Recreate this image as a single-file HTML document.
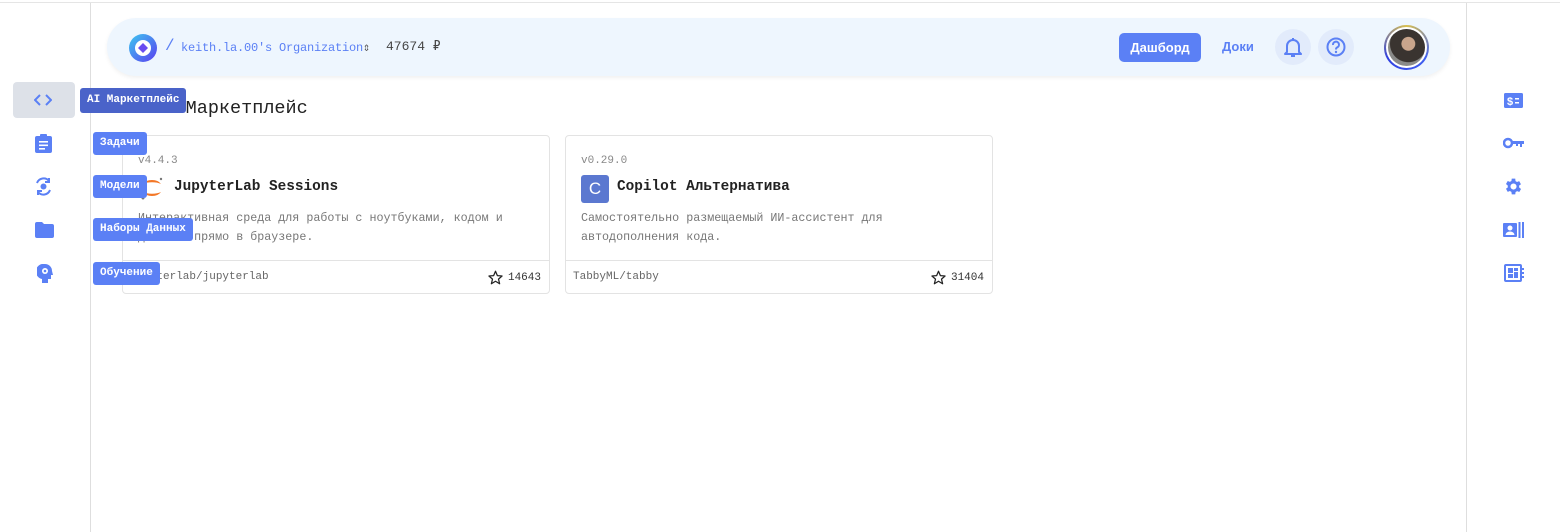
<!DOCTYPE html>
<html><head><meta charset="utf-8"><style>
*{box-sizing:border-box;margin:0;padding:0}
body{width:1560px;height:532px;background:#fff;font-family:"Liberation Mono",monospace;position:relative;overflow:hidden;color:#222}
.abs{position:absolute}
.topline{left:0;top:2px;width:1560px;height:1px;background:#e5e5e5}
.lside{left:90px;top:3px;width:1px;height:529px;background:#dedede}
.rside{left:1466px;top:3px;width:1px;height:529px;background:#dedede}
.hdr{left:107px;top:18px;width:1343px;height:58px;border-radius:29px;background:#eef6fe;box-shadow:0 2px 4px rgba(0,0,0,.06)}
.tip{position:absolute;height:23px;line-height:23px;padding:0 7px;color:#fff;font-size:11px;border-radius:3px;background:#5b80f5;white-space:nowrap;font-family:"Liberation Mono",monospace;font-weight:bold}
.card{position:absolute;top:135px;width:428px;height:159px;border:1px solid #e3e3e3;border-radius:4px;background:#fff}
.ver{position:absolute;left:15px;top:19px;font-size:11px;color:#888}
.ttl{position:absolute;left:51px;top:43px;font-size:14.4px;font-weight:bold;color:#222}
.desc{position:absolute;left:15px;top:73px;font-size:11.7px;line-height:19px;color:#777;width:400px}
.foot{position:absolute;left:0;top:124px;width:100%;border-top:1px solid #e3e3e3;height:34px}
.repo{position:absolute;left:7px;top:10px;font-size:11px;color:#666}
.stars{position:absolute;right:8px;top:9px;font-size:11px;color:#333;display:flex;align-items:center;gap:5px}
.ic{position:absolute;fill:#5b80f5}
</style></head><body>
<div class="abs topline"></div>
<div class="abs lside"></div>
<div class="abs rside"></div>

<div class="abs" style="left:13px;top:82px;width:62px;height:36px;border-radius:4px;background:#dde1e8"></div>
<svg class="abs" style="left:34px;top:93px" width="18" height="14" viewBox="0 0 18 14"><path d="M6 2L1 7l5 5M12 2l5 5-5 5" stroke="#5b80f5" stroke-width="2" fill="none"/></svg>
<svg class="ic" style="left:35px;top:134px" width="17" height="19" viewBox="0 0 17 19"><rect x="0" y="2" width="17" height="17" rx="2"/><rect x="5" y="0" width="7" height="4" rx="1"/><rect x="4" y="7" width="9" height="1.6" fill="#fff"/><rect x="4" y="10.5" width="9" height="1.6" fill="#fff"/><rect x="4" y="14" width="6" height="1.6" fill="#fff"/></svg>
<svg class="abs" style="left:34px;top:177px" width="19" height="19" viewBox="0 0 19 19"><path d="M3 6a7 7 0 0 1 12-2M16 13a7 7 0 0 1-12 2" stroke="#5b80f5" stroke-width="2" fill="none"/><circle cx="9.5" cy="9.5" r="3" fill="#5b80f5"/><path d="M15 1v4h-4M4 18v-4h4" stroke="#5b80f5" stroke-width="2" fill="none"/></svg>
<svg class="ic" style="left:35px;top:222px" width="19" height="16" viewBox="0 0 19 16"><path d="M0 2a2 2 0 0 1 2-2h5l2 2h8a2 2 0 0 1 2 2v10a2 2 0 0 1-2 2H2a2 2 0 0 1-2-2z"/></svg>
<svg class="ic" style="left:37px;top:264px" width="16" height="19" viewBox="0 0 16 19"><path d="M8 0a7 7 0 0 1 7 7l1 4h-2v4h-3v4H5v-4a7 7 0 0 1 3-15z"/><circle cx="8" cy="7" r="3" fill="#fff"/><circle cx="8" cy="7" r="1.3"/></svg>

<div class="abs hdr"></div>
<svg class="abs" style="left:128px;top:33px" width="30" height="30" viewBox="0 0 30 30"><defs><linearGradient id="g" x1="0" y1="0" x2="1" y2="1"><stop offset="0" stop-color="#3cc8f0"/><stop offset="1" stop-color="#5b3ef0"/></linearGradient></defs><circle cx="15" cy="15" r="14" fill="url(#g)"/><circle cx="15" cy="15" r="8" fill="#fff"/><path d="M15 10l5 5-5 5-5-5z" fill="#6a4cf0"/></svg>
<div class="abs" style="left:165px;top:37px;font-size:16px;color:#5b80f5">/</div>
<div class="abs" style="left:181px;top:40px;font-size:12px;color:#5b80f5;letter-spacing:-0.2px">keith.la.00's Organization<span style="color:#555">⇕</span></div>
<div class="abs" style="left:386px;top:39px;font-size:13px;color:#444">47674 ₽</div>
<div class="abs" style="left:1119px;top:33px;width:82px;height:29px;border-radius:5px;background:#5b80f5;color:#fff;font-family:'Liberation Sans',sans-serif;font-weight:bold;font-size:13px;line-height:29px;text-align:center">Дашборд</div>
<div class="abs" style="left:1222px;top:39px;font-family:'Liberation Sans',sans-serif;font-weight:bold;font-size:13px;color:#5b80f5">Доки</div>
<div class="abs" style="left:1275px;top:29px;width:36px;height:36px;border-radius:50%;background:#e2ebfb"></div>
<svg class="abs" style="left:1284px;top:37px" width="18" height="21" viewBox="0 0 18 21"><path d="M9 1v2M3 15V9a6 6 0 0 1 12 0v6l2 2H1z" stroke="#5b80f5" stroke-width="2" fill="none" stroke-linejoin="round"/><path d="M7 19h4" stroke="#5b80f5" stroke-width="2"/></svg>
<div class="abs" style="left:1318px;top:29px;width:36px;height:36px;border-radius:50%;background:#e2ebfb"></div>
<svg class="abs" style="left:1326px;top:37px" width="20" height="20" viewBox="0 0 20 20"><circle cx="10" cy="10" r="8.5" stroke="#5b80f5" stroke-width="2" fill="none"/><path d="M7 8a3 3 0 1 1 4 2.5c-1 .5-1 1-1 2" stroke="#5b80f5" stroke-width="2" fill="none"/><circle cx="10" cy="15" r="1.2" fill="#5b80f5"/></svg>
<div class="abs" style="left:1384px;top:25px;width:45px;height:45px;border-radius:50%;background:conic-gradient(#d9c050,#4060f0,#3040e0,#d9c050);padding:2px"><div style="width:100%;height:100%;border-radius:50%;background:#fff;padding:2px"><div style="width:100%;height:100%;border-radius:50%;background:radial-gradient(circle at 55% 40%,#c9a58c 0 22%,#3a3430 24% 60%,#8a8a88 62%)"></div></div></div>

<svg class="ic" style="left:1504px;top:93px" width="19" height="15" viewBox="0 0 19 15"><rect width="19" height="15" rx="1.5"/><text x="3" y="12" font-size="11" font-weight="bold" fill="#fff" font-family="Liberation Sans">$</text><rect x="11" y="5" width="4" height="1.5" fill="#fff"/><rect x="11" y="9" width="4" height="1.5" fill="#fff"/></svg>
<svg class="ic" style="left:1503px;top:137px" width="21" height="12" viewBox="0 0 21 12"><circle cx="5" cy="6" r="4" stroke="#5b80f5" stroke-width="2.5" fill="none"/><path d="M9 4h12v3h-2v3h-2V7h-2v2h-2V7H9z"/></svg>
<svg class="ic" style="left:1503px;top:176px" width="21" height="21" viewBox="0 0 24 24"><path d="M19.4 13a7.5 7.5 0 0 0 0-2l2.1-1.6-2-3.5-2.5 1a7 7 0 0 0-1.7-1L15 3h-4l-.4 2.7a7 7 0 0 0-1.7 1l-2.5-1-2 3.5L6.5 11a7.5 7.5 0 0 0 0 2l-2.1 1.6 2 3.5 2.5-1a7 7 0 0 0 1.7 1L11 21h4l.4-2.7a7 7 0 0 0 1.7-1l2.5 1 2-3.5zM13 15.5a3.5 3.5 0 1 1 0-7 3.5 3.5 0 0 1 0 7z" transform="translate(-1 0)"/></svg>
<svg class="ic" style="left:1503px;top:222px" width="21" height="16" viewBox="0 0 21 16"><rect x="0" y="1" width="14" height="14" rx="1"/><circle cx="7" cy="6" r="2.5" fill="#fff"/><path d="M2.5 13a4.5 3.5 0 0 1 9 0z" fill="#fff"/><rect x="15.5" y="0" width="2" height="16"/><rect x="19" y="0" width="2" height="16"/></svg>
<svg class="ic" style="left:1504px;top:264px" width="20" height="18" viewBox="0 0 20 18"><rect x="1" y="1" width="16" height="16" rx="1" stroke="#5b80f5" stroke-width="2" fill="none"/><rect x="4" y="4" width="5" height="5"/><rect x="10" y="4" width="4" height="3"/><rect x="10" y="8" width="4" height="6"/><rect x="4" y="10" width="5" height="4"/><rect x="18" y="4" width="2" height="2"/><rect x="18" y="8" width="2" height="2"/><rect x="18" y="12" width="2" height="2"/></svg>

<div class="abs" style="left:119px;top:98px;font-size:18.5px;color:#222;white-space:pre">&lt;&gt; AI Маркетплейс</div>

<div class="card" style="left:122px">
  <div class="ver">v4.4.3</div>
  <svg class="abs" style="left:15px;top:38px" width="28" height="28" viewBox="0 0 28 28"><path d="M5 10a10 7 0 0 1 18 0a12 5 0 0 0-18 0zM5 18a10 7 0 0 0 18 0a12 5 0 0 1-18 0z" fill="#f37726"/><circle cx="23" cy="5" r="1.2" fill="#777"/><circle cx="5" cy="24" r="1.5" fill="#777"/></svg>
  <div class="ttl">JupyterLab Sessions</div>
  <div class="desc">Интерактивная среда для работы с ноутбуками, кодом и данными прямо в браузере.</div>
  <div class="foot"><div class="repo">jupyterlab/jupyterlab</div><div class="stars"><svg width="15" height="15" viewBox="0 0 24 24"><path d="M12 2l3 7 7.5.6-5.7 5 1.8 7.4L12 18l-6.6 4 1.8-7.4-5.7-5L9 9z" stroke="#222" stroke-width="2" fill="none" stroke-linejoin="round"/></svg>14643</div></div>
</div>
<div class="card" style="left:565px">
  <div class="ver">v0.29.0</div>
  <div class="abs" style="left:15px;top:39px;width:28px;height:28px;border-radius:3px;background:#5b78d0;color:#fff;font-family:'Liberation Sans',sans-serif;font-size:17px;line-height:28px;text-align:center">C</div>
  <div class="ttl">Copilot Альтернатива</div>
  <div class="desc">Самостоятельно размещаемый ИИ-ассистент для автодополнения кода.</div>
  <div class="foot"><div class="repo">TabbyML/tabby</div><div class="stars"><svg width="15" height="15" viewBox="0 0 24 24"><path d="M12 2l3 7 7.5.6-5.7 5 1.8 7.4L12 18l-6.6 4 1.8-7.4-5.7-5L9 9z" stroke="#222" stroke-width="2" fill="none" stroke-linejoin="round"/></svg>31404</div></div>
</div>

<div class="tip" style="left:80px;top:88px;background:#4a63c9;height:25px;line-height:25px">AI Маркетплейс</div>
<div class="tip" style="left:93px;top:132px">Задачи</div>
<div class="tip" style="left:93px;top:175px">Модели</div>
<div class="tip" style="left:93px;top:218px">Наборы Данных</div>
<div class="tip" style="left:93px;top:262px">Обучение</div>
</body></html>
